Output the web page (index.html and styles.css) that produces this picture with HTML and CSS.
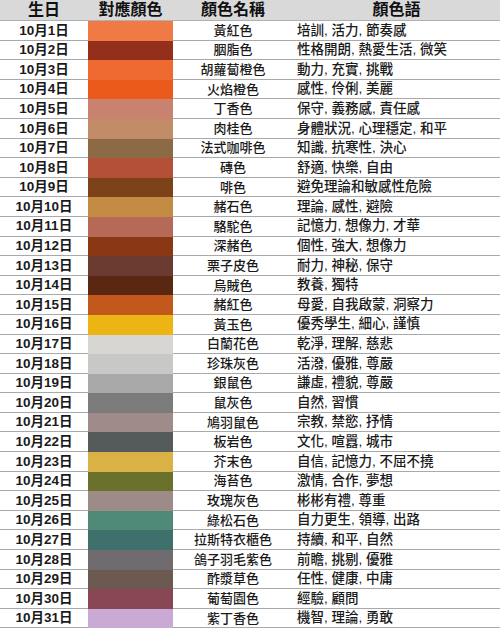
FILE: index.html
```html
<!DOCTYPE html>
<html lang="zh-Hant">
<head>
<meta charset="utf-8">
<title>10月生日色</title>
<link rel="stylesheet" href="styles.css">
</head>
<body>
<div class="table">
  <div class="row head">
    <div class="c date">生日</div>
    <div class="c">對應顏色</div>
    <div class="c name">顏色名稱</div>
    <div class="c">顏色語</div>
  </div>
  <div class="row"><div class="c date">10月1日</div><div class="sw" style="--c:#f07a45"></div><div class="c name">黃紅色</div><div class="c desc">培訓, 活力, 節奏感</div></div>
  <div class="row"><div class="c date">10月2日</div><div class="sw" style="--c:#932f1a"></div><div class="c name">胭脂色</div><div class="c desc">性格開朗, 熱愛生活, 微笑</div></div>
  <div class="row"><div class="c date">10月3日</div><div class="sw" style="--c:#ef6a30"></div><div class="c name">胡蘿蔔橙色</div><div class="c desc">動力, 充實, 挑戰</div></div>
  <div class="row"><div class="c date">10月4日</div><div class="sw" style="--c:#eb5a1b"></div><div class="c name">火焰橙色</div><div class="c desc">感性, 伶俐, 美麗</div></div>
  <div class="row"><div class="c date">10月5日</div><div class="sw" style="--c:#c8826f"></div><div class="c name">丁香色</div><div class="c desc">保守, 義務感, 責任感</div></div>
  <div class="row"><div class="c date">10月6日</div><div class="sw" style="--c:#c28c69"></div><div class="c name">肉桂色</div><div class="c desc">身體狀況, 心理穩定, 和平</div></div>
  <div class="row"><div class="c date">10月7日</div><div class="sw" style="--c:#8d6a46"></div><div class="c name">法式咖啡色</div><div class="c desc">知識, 抗寒性, 決心</div></div>
  <div class="row"><div class="c date">10月8日</div><div class="sw" style="--c:#b55038"></div><div class="c name">磚色</div><div class="c desc">舒適, 快樂, 自由</div></div>
  <div class="row"><div class="c date">10月9日</div><div class="sw" style="--c:#7b4119"></div><div class="c name">啡色</div><div class="c desc">避免理論和敏感性危險</div></div>
  <div class="row"><div class="c date">10月10日</div><div class="sw" style="--c:#c48b44"></div><div class="c name">赭石色</div><div class="c desc">理論, 感性, 避險</div></div>
  <div class="row"><div class="c date">10月11日</div><div class="sw" style="--c:#b76957"></div><div class="c name">駱駝色</div><div class="c desc">記憶力, 想像力, 才華</div></div>
  <div class="row"><div class="c date">10月12日</div><div class="sw" style="--c:#8a3714"></div><div class="c name">深赭色</div><div class="c desc">個性, 強大, 想像力</div></div>
  <div class="row"><div class="c date">10月13日</div><div class="sw" style="--c:#6b3b32"></div><div class="c name">栗子皮色</div><div class="c desc">耐力, 神秘, 保守</div></div>
  <div class="row"><div class="c date">10月14日</div><div class="sw" style="--c:#5a2713"></div><div class="c name">烏賊色</div><div class="c desc">教養, 獨特</div></div>
  <div class="row"><div class="c date">10月15日</div><div class="sw" style="--c:#c3581d"></div><div class="c name">赭紅色</div><div class="c desc">母愛, 自我啟蒙, 洞察力</div></div>
  <div class="row"><div class="c date">10月16日</div><div class="sw" style="--c:#ecb513"></div><div class="c name">黃玉色</div><div class="c desc">優秀學生, 細心, 謹慎</div></div>
  <div class="row"><div class="c date">10月17日</div><div class="sw" style="--c:#d8d6d2"></div><div class="c name">白蘭花色</div><div class="c desc">乾淨, 理解, 慈悲</div></div>
  <div class="row"><div class="c date">10月18日</div><div class="sw" style="--c:#c8c8c6"></div><div class="c name">珍珠灰色</div><div class="c desc">活潑, 優雅, 尊嚴</div></div>
  <div class="row"><div class="c date">10月19日</div><div class="sw" style="--c:#a8a8a8"></div><div class="c name">銀鼠色</div><div class="c desc">謙虛, 禮貌, 尊嚴</div></div>
  <div class="row"><div class="c date">10月20日</div><div class="sw" style="--c:#7b7b7b"></div><div class="c name">鼠灰色</div><div class="c desc">自然, 習慣</div></div>
  <div class="row"><div class="c date">10月21日</div><div class="sw" style="--c:#9f8b8a"></div><div class="c name">鳩羽鼠色</div><div class="c desc">宗教, 禁慾, 抒情</div></div>
  <div class="row"><div class="c date">10月22日</div><div class="sw" style="--c:#555a5a"></div><div class="c name">板岩色</div><div class="c desc">文化, 喧囂, 城市</div></div>
  <div class="row"><div class="c date">10月23日</div><div class="sw" style="--c:#dab144"></div><div class="c name">芥末色</div><div class="c desc">自信, 記憶力, 不屈不撓</div></div>
  <div class="row"><div class="c date">10月24日</div><div class="sw" style="--c:#69712d"></div><div class="c name">海苔色</div><div class="c desc">激情, 合作, 夢想</div></div>
  <div class="row"><div class="c date">10月25日</div><div class="sw" style="--c:#9d8b87"></div><div class="c name">玫瑰灰色</div><div class="c desc">彬彬有禮, 尊重</div></div>
  <div class="row"><div class="c date">10月26日</div><div class="sw" style="--c:#4f8977"></div><div class="c name">綠松石色</div><div class="c desc">自力更生, 領導, 出路</div></div>
  <div class="row"><div class="c date">10月27日</div><div class="sw" style="--c:#40706b"></div><div class="c name">拉斯特衣櫃色</div><div class="c desc">持續, 和平, 自然</div></div>
  <div class="row"><div class="c date">10月28日</div><div class="sw" style="--c:#6f6b6f"></div><div class="c name">鴿子羽毛紫色</div><div class="c desc">前瞻, 挑剔, 優雅</div></div>
  <div class="row"><div class="c date">10月29日</div><div class="sw" style="--c:#6c5a51"></div><div class="c name">酢漿草色</div><div class="c desc">任性, 健康, 中庸</div></div>
  <div class="row"><div class="c date">10月30日</div><div class="sw" style="--c:#894755"></div><div class="c name">葡萄園色</div><div class="c desc">經驗, 顧問</div></div>
  <div class="row"><div class="c date">10月31日</div><div class="sw" style="--c:#c9aad5"></div><div class="c name">紫丁香色</div><div class="c desc">機智, 理論, 勇敢</div></div>
</div>
</body>
</html>
```

FILE: styles.css
```css
html, body {
  margin: 0;
  padding: 0;
  background: #ffffff;
}

body {
  width: 500px;
  height: 630px;
  overflow: hidden;
  font-family: "Liberation Sans", "Noto Sans CJK TC", sans-serif;
  color: #1a1a1a;
}

.table {
  display: flex;
  flex-direction: column;
}

.row {
  display: grid;
  grid-template-columns: 88px 85px 120px 1fr;
  height: 19.6px;
  box-sizing: border-box;
  border-bottom: 1px solid #a9a9a9;
  font-size: 13px;
  font-weight: 500;
}

.row.head {
  height: 21px;
  background: #d9d9d9;
  font-size: 16px;
  font-weight: 700;
  color: #111;
  border-bottom: 1px solid #b0b0b0;
}

.c {
  display: flex;
  align-items: center;
  justify-content: center;
  white-space: nowrap;
  line-height: 1;
}

.date {
  font-weight: 700;
  font-size: 13.5px;
}

.row.head .c {
  font-weight: 700;
  font-size: 16px;
}

.desc {
  justify-content: flex-start;
  padding-left: 4px;
  font-size: 13.5px;
}

.sw {
  background: var(--c);
  margin-bottom: -1px;
}
```
